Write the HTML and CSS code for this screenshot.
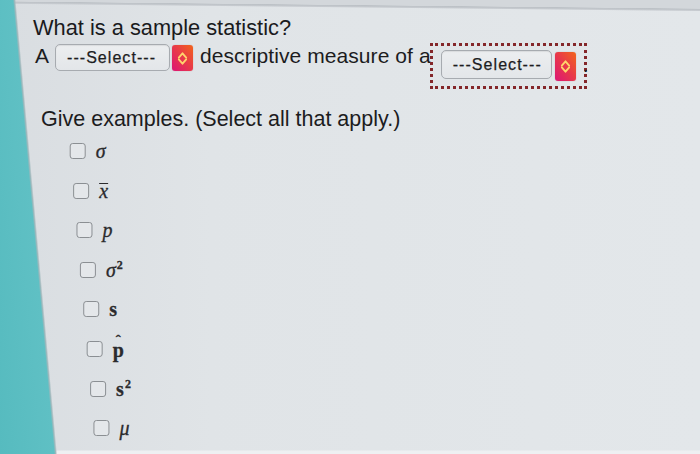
FILE: index.html
```html
<!DOCTYPE html>
<html>
<head>
<meta charset="utf-8">
<link rel="stylesheet" href="styles.css">
</head>
<body>
<main class="page">
  <h1 class="question">What is a sample statistic?</h1>
  <div class="answer-line">
    <span class="word word-a">A</span>
    <span class="select select-1">---Select---</span>
    <span class="spin spin-1"><svg viewBox="0 0 11 15" width="11" height="15"><path d="M1.8 6.6 L5.5 2.3 L9.2 6.6 M1.8 8.4 L5.5 12.7 L9.2 8.4" fill="none" stroke="#ffd56c" stroke-width="1.8" stroke-linecap="round" stroke-linejoin="round"/></svg></span>
    <span class="word word-desc">descriptive measure of a</span>
    <span class="focus">
      <span class="select select-2">---Select---</span>
      <span class="spin spin-2"><svg viewBox="0 0 11 15" width="11" height="15"><path d="M1.8 6.6 L5.5 2.3 L9.2 6.6 M1.8 8.4 L5.5 12.7 L9.2 8.4" fill="none" stroke="#ffd56c" stroke-width="1.8" stroke-linecap="round" stroke-linejoin="round"/></svg></span>
    </span>
    <span class="word word-dot">.</span>
  </div>
  <p class="give">Give examples. (Select all that apply.)</p>
  <ul class="options">
    <li class="opt"><span class="box"></span><span class="sym it">σ</span></li>
    <li class="opt"><span class="box"></span><span class="sym it"><span class="bar">x</span></span></li>
    <li class="opt"><span class="box"></span><span class="sym it">p</span></li>
    <li class="opt"><span class="box"></span><span class="sym it">σ<sup class="sq">2</sup></span></li>
    <li class="opt"><span class="box"></span><span class="sym bd">s</span></li>
    <li class="opt"><span class="box"></span><span class="sym bd"><span class="hatted"><span class="hat">ˆ</span>p</span></span></li>
    <li class="opt"><span class="box"></span><span class="sym bd">s<sup class="sq">2</sup></span></li>
    <li class="opt"><span class="box"></span><span class="sym it">μ</span></li>
  </ul>
</main>
</body>
</html>
```

FILE: styles.css
```css
html, body {
  margin: 0;
  padding: 0;
}

body {
  width: 700px;
  height: 454px;
  overflow: hidden;
  font-family: "Liberation Sans", Arial, sans-serif;
  color: #1b1c1e;
  background:
    linear-gradient(84.8deg, #56bbbf 0, #5fc0c4 54px, #9fb8bc 55.5px, transparent 57px),
    linear-gradient(180.6deg, #d3d7db 0, #d3d7db 8.5px, #bcc1c6 9px, #c6cacf 10.5px, transparent 11.5px),
    linear-gradient(to top, #eef0f2 0, #eef0f2 3px, transparent 4px),
    linear-gradient(90deg, #d9dde1 0%, #e0e4e7 30%, #e3e7ea 100%);
}

.page {
  padding-top: 15px;
}

.question {
  margin: 0 0 0 33px;
  font-size: 21.8px;
  line-height: 26px;
  font-weight: normal;
  color: #1a1a1c;
}

.answer-line {
  display: flex;
  align-items: flex-start;
  height: 52px;
  margin-top: -1px;
  padding-left: 35px;
}

.word {
  font-size: 21px;
  line-height: 24px;
  margin-top: 4px;
  color: #1c1c1e;
  white-space: nowrap;
}

.word-desc {
  margin-left: 7px;
  letter-spacing: 0.08px;
}

.word-dot {
  margin-top: 13px;
  margin-left: -4px;
}

.select {
  display: flex;
  align-items: center;
  box-sizing: border-box;
  padding-left: 11px;
  font-size: 16px;
  letter-spacing: 1.05px;
  color: #1d1d1f;
  background: linear-gradient(#eceef0, #e3e6e9);
  border: 1px solid #a7abb0;
  border-radius: 5px;
  box-shadow: inset 0 1px 1px rgba(0, 0, 0, 0.08);
  -webkit-text-stroke: 0.25px #1d1d1f;
}

.select-1 {
  width: 115px;
  height: 27px;
  margin-top: 4px;
  margin-left: 6px;
}

.select-2 {
  width: 111px;
  height: 29px;
  margin-top: 2px;
}

.spin {
  display: flex;
  align-items: center;
  justify-content: center;
  width: 21px;
  border-radius: 3px;
  background: linear-gradient(to bottom left, #f2651b 0%, #e8384a 50%, #dc1676 100%);
  box-shadow: 0 0 1px rgba(120, 20, 20, 0.4);
}

.spin-1 {
  height: 26px;
  margin-top: 5px;
  margin-left: 2px;
}

.spin-2 {
  height: 29px;
  margin-top: 4px;
  margin-left: 3px;
}

.focus {
  display: flex;
  align-items: flex-start;
  box-sizing: border-box;
  width: 157px;
  height: 46px;
  margin-top: 3px;
  margin-left: -1px;
  padding: 2px 0 0 8px;
  border: 3px dotted #84272a;
}

.give {
  margin: 14px 0 0 41px;
  font-size: 21.5px;
  line-height: 26px;
  color: #1c1c1e;
}

.options {
  list-style: none;
  margin: -1.5px 0 0 68px;
  padding: 0;
  transform: skewX(4.9deg);
  transform-origin: 0 0;
}

.opt {
  display: flex;
  align-items: center;
  height: 39.6px;
  transform: skewX(-4.9deg);
}

.box {
  box-sizing: border-box;
  width: 16px;
  height: 16px;
  border: 1.5px solid #8b8f93;
  border-radius: 3px;
  background: #e4e7ea;
  flex: none;
}

.sym {
  margin-left: 10px;
  font-family: "Liberation Serif", "Times New Roman", serif;
  font-size: 20px;
  line-height: 20px;
  color: #2b2b2d;
  -webkit-text-stroke: 0.3px #2b2b2d;
}

.it {
  font-style: italic;
}

.bd {
  font-weight: bold;
}

.bar {
  display: inline-block;
  line-height: 12px;
  padding-top: 1px;
  border-top: 1.5px solid #2b2b2d;
}

.hatted {
  display: inline-block;
  text-align: center;
  line-height: 14px;
}

.hat {
  display: block;
  font-size: 15px;
  line-height: 5px;
  height: 5px;
  font-weight: normal;
}

.sq {
  font-size: 12px;
  line-height: 0;
  vertical-align: 8px;
  font-style: normal;
  font-weight: bold;
  margin-left: 1px;
}
```
